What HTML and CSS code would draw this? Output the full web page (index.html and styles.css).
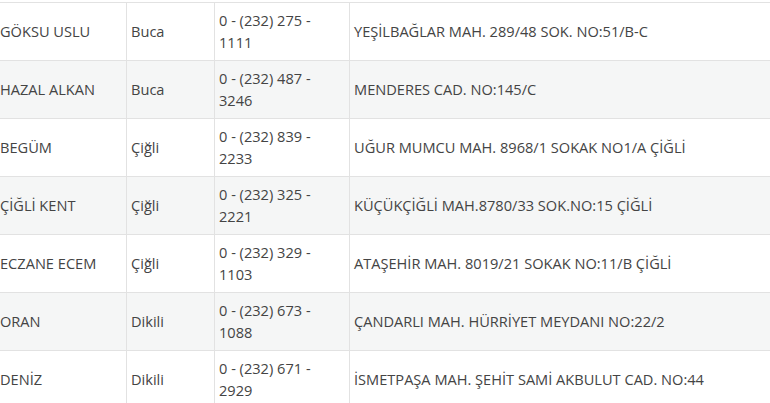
FILE: index.html
```html
<!DOCTYPE html>
<html lang="tr">
<head>
<meta charset="utf-8">
<title>Nöbetçi Eczaneler</title>
<link rel="stylesheet" href="styles.css">
</head>
<body>
<table class="list">
  <colgroup>
    <col class="c-name">
    <col class="c-district">
    <col class="c-phone">
    <col class="c-address">
  </colgroup>
  <tbody>
    <tr><td>GÖKSU USLU</td><td>Buca</td><td>0 - (232) 275 - 1111</td><td>YEŞİLBAĞLAR MAH. 289/48 SOK. NO:51/B-C</td></tr>
    <tr><td>HAZAL ALKAN</td><td>Buca</td><td>0 - (232) 487 - 3246</td><td>MENDERES CAD. NO:145/C</td></tr>
    <tr><td>BEGÜM</td><td>Çiğli</td><td>0 - (232) 839 - 2233</td><td>UĞUR MUMCU MAH. 8968/1 SOKAK NO1/A ÇİĞLİ</td></tr>
    <tr><td>ÇİĞLİ KENT</td><td>Çiğli</td><td>0 - (232) 325 - 2221</td><td>KÜÇÜKÇİĞLİ MAH.8780/33 SOK.NO:15 ÇİĞLİ</td></tr>
    <tr><td>ECZANE ECEM</td><td>Çiğli</td><td>0 - (232) 329 - 1103</td><td>ATAŞEHİR MAH. 8019/21 SOKAK NO:11/B ÇİĞLİ</td></tr>
    <tr><td>ORAN</td><td>Dikili</td><td>0 - (232) 673 - 1088</td><td>ÇANDARLI MAH. HÜRRİYET MEYDANI NO:22/2</td></tr>
    <tr><td>DENİZ</td><td>Dikili</td><td>0 - (232) 671 - 2929</td><td>İSMETPAŞA MAH. ŞEHİT SAMİ AKBULUT CAD. NO:44</td></tr>
  </tbody>
</table>
</body>
</html>
```
FILE: styles.css
```css
html, body {
  margin: 0;
  padding: 0;
  background: #fff;
  overflow: hidden;
}
body {
  font-family: "Open Sans", "Noto Sans", sans-serif;
  font-size: 14.6px;
  line-height: 22px;
  color: #444;
}
.list {
  border-collapse: collapse;
  table-layout: fixed;
  width: 820px;
  margin: 2px 0 0 -5px;
}
.c-name { width: 131px; }
.c-district { width: 88px; }
.c-phone { width: 135px; }
.c-address { width: 466px; }
.list td {
  padding: 6px 8px 7px 4px;
  border: 1px solid #e2e2e2;
  vertical-align: middle;
}
.list tr:nth-child(even) td {
  background: #f5f6f6;
}
```
